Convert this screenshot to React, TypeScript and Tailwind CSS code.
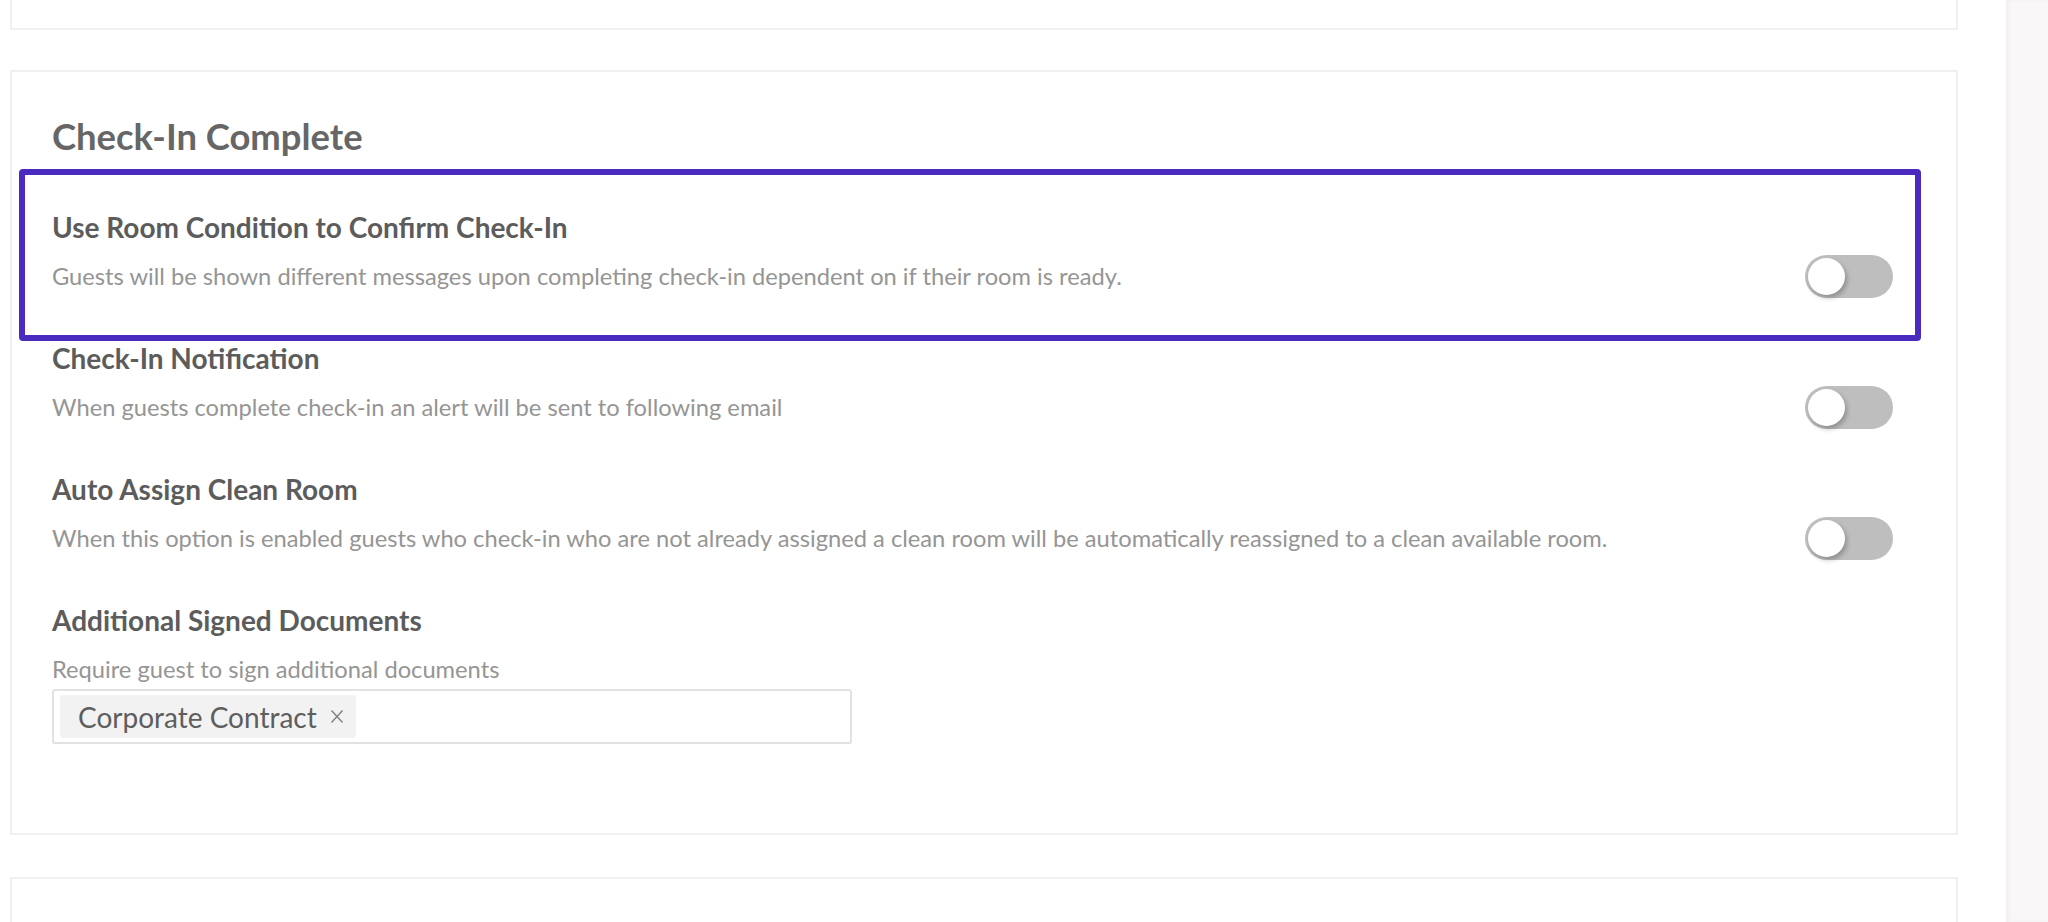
import React from 'react';

type Setting = {
  id: string;
  title: string;
  description: string;
  enabled: boolean;
  highlighted?: boolean;
};

const settings: Setting[] = [
  {
    id: 'room-condition',
    title: 'Use Room Condition to Confirm Check-In',
    description: 'Guests will be shown different messages upon completing check-in dependent on if their room is ready.',
    enabled: false,
    highlighted: true,
  },
  {
    id: 'notification',
    title: 'Check-In Notification',
    description: 'When guests complete check-in an alert will be sent to following email',
    enabled: false,
  },
  {
    id: 'auto-assign',
    title: 'Auto Assign Clean Room',
    description:
      'When this option is enabled guests who check-in who are not already assigned a clean room will be automatically reassigned to a clean available room.',
    enabled: false,
  },
];

function Toggle({ on }: { on: boolean }) {
  return (
    <button
      type="button"
      role="switch"
      aria-checked={on}
      className="relative h-[43px] w-[88px] shrink-0 rounded-full bg-[#bebebe]"
    >
      <span className="absolute left-[3px] top-[3px] h-[37px] w-[37px] rounded-full bg-white shadow-[2px_3px_5px_rgba(0,0,0,0.25)]" />
    </button>
  );
}

function SettingRow({ s }: { s: Setting }) {
  return (
    <div className="relative">
      {s.highlighted && (
        <div className="pointer-events-none absolute -left-[33px] -right-[28px] -top-[42px] -bottom-[43px] rounded-[4px] border-[6px] border-[#4a2abf]" />
      )}
      <h3 className="text-[28px] leading-[32px] font-bold text-[#5c5c5c]">{s.title}</h3>
      <div className="mt-[11px] flex h-[44px] items-center justify-between gap-8">
        <p className="text-[23.7px] leading-[28px] text-[#959595]">{s.description}</p>
        <Toggle on={s.enabled} />
      </div>
    </div>
  );
}

export default function App() {
  return (
    <div className="flex h-[922px] w-full overflow-hidden bg-white font-['Lato',sans-serif]">
      <main className="flex-1 pl-[10px] pr-[48px]">
        <div className="h-[30px] border-x-2 border-b-2 border-[#f0f0f0]" />

        <section className="mt-[40px] h-[765px] border-2 border-[#f0f0f0] pt-[43px] pl-[40px] pr-[63px]">
          <h2 className="text-[36.4px] leading-[42px] font-bold text-[#666666]">Check-In Complete</h2>

          <div className="mt-[54px] flex flex-col gap-[44px]">
            {settings.map((s) => (
              <SettingRow key={s.id} s={s} />
            ))}

            <div>
              <h3 className="text-[28px] leading-[32px] font-bold text-[#5c5c5c]">Additional Signed Documents</h3>
              <p className="mt-[19px] text-[23.7px] leading-[28px] text-[#959595]">Require guest to sign additional documents</p>
              <div className="mt-[6px] flex h-[55px] w-[800px] items-center rounded-[3px] border-2 border-[#e2e2e2] px-[6px]">
                <span className="inline-flex h-[43px] items-center rounded-[4px] bg-[#f2f2f2] pl-[18px] pr-[12px] text-[28px] text-[#5e5e5e]">
                  Corporate Contract
                  <svg className="ml-[13px]" width="14" height="15" viewBox="0 0 14 15" fill="none" stroke="#808080" strokeWidth="1.4">
                    <path d="M1.5 1.5 12.5 13.5M12.5 1.5 1.5 13.5" />
                  </svg>
                </span>
              </div>
            </div>
          </div>
        </section>

        <div className="mt-[42px] h-[60px] border-x-2 border-t-2 border-[#f0f0f0]" />
      </main>
      <aside className="w-[42px] bg-[#f9f7f8] shadow-[inset_3px_0_4px_rgba(0,0,0,0.03)]" />
    </div>
  );
}
